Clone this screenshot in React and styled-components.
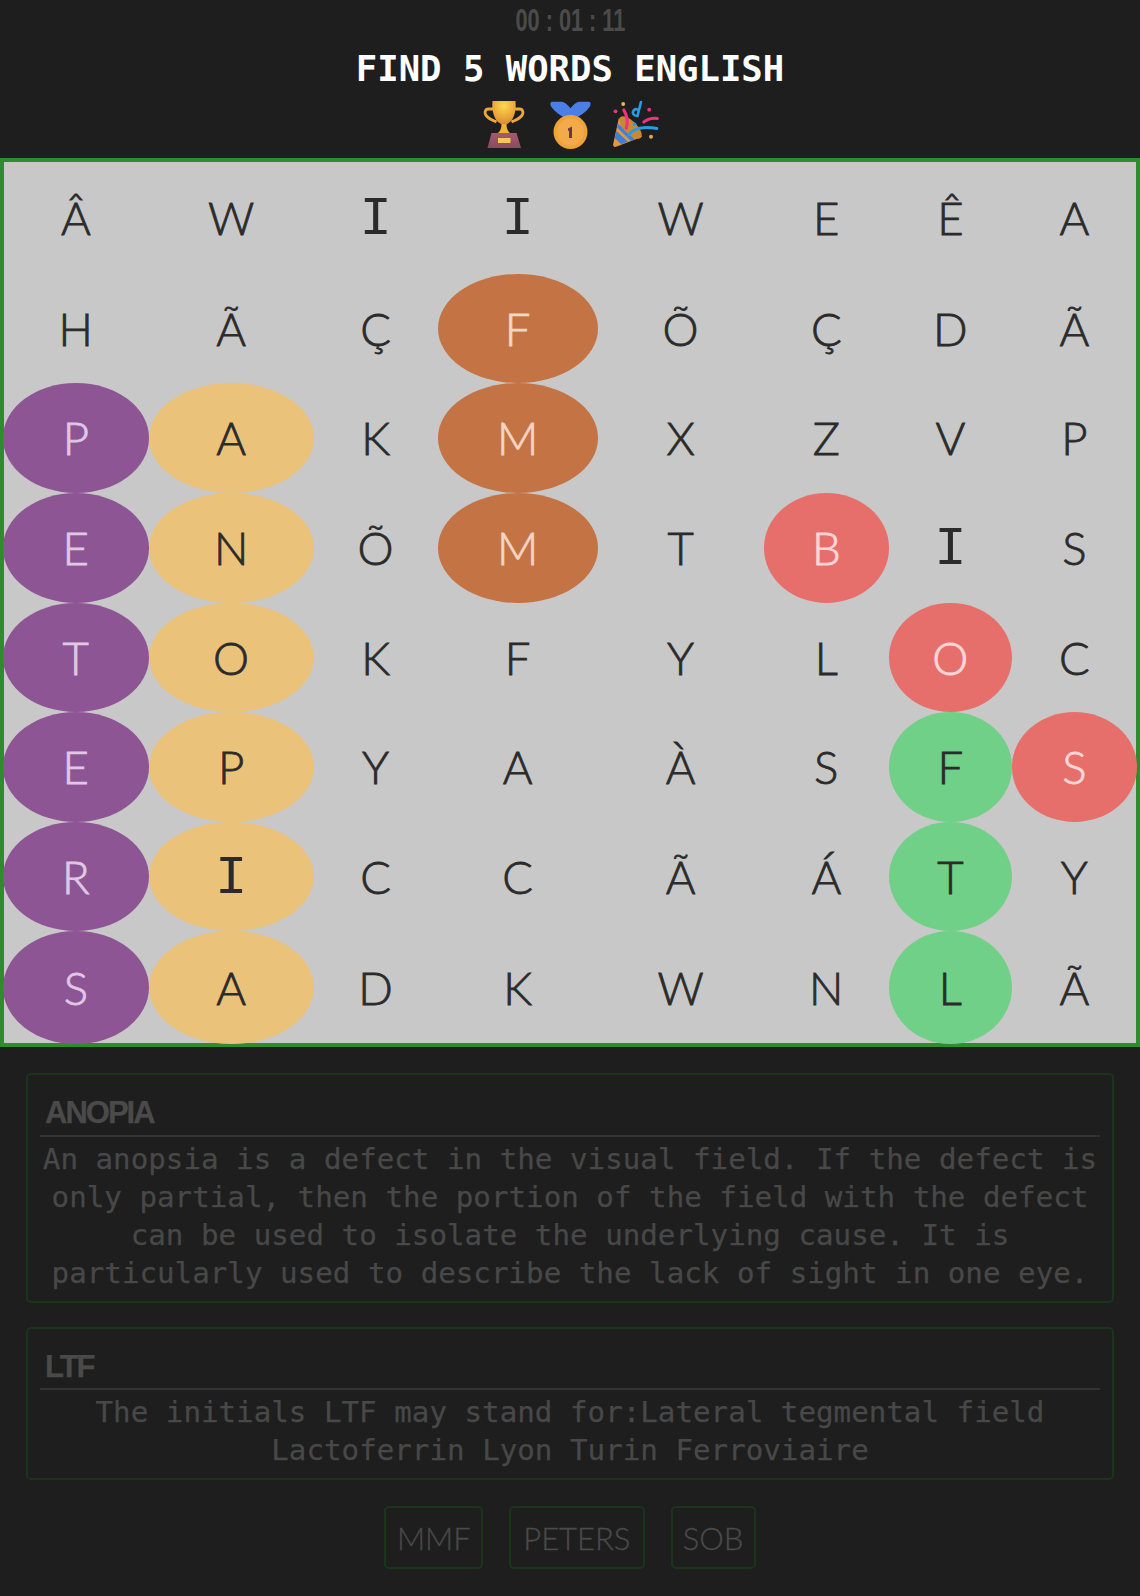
import React from "react";
import styled, { createGlobalStyle } from "styled-components";

const Global = createGlobalStyle`
  html, body { margin: 0; padding: 0; background: #1e1e1e; }
  body { font-family: "DejaVu Sans Mono", monospace; }
`;
const Page = styled.div`
  width: 1140px; height: 1596px; background: #1e1e1e; display: flex; flex-direction: column; overflow: hidden;
`;
const Header = styled.header`
  height: 158px; display: flex; flex-direction: column; align-items: center;
`;
const Timer = styled.div`
  height: 44px; line-height: 42px; font-family: "Liberation Sans", sans-serif; white-space: pre;
  font-size: 31px; font-weight: 700; color: #4b4b4b; transform: scaleX(0.7);
`;
const Title = styled.h1`
  margin: 0; height: 50px; line-height: 50px; font-size: 35.6px; font-weight: 700; color: #fff;
  font-family: "DejaVu Sans Mono", monospace;
`;
const Trophies = styled.div`
  display: flex; justify-content: center; gap: 16px; margin-top: 6px;
  svg { display: block; width: 50px; height: 50px; }
`;
const Board = styled.div`
  border: 4px solid #2e8b2e; background: #c8c8c8; height: 881px;
`;
const Grid = styled.div`
  margin-left: -1px; height: 881px; display: grid;
  grid-template-columns: 145.6px 165px 124px 160px 166px 125.4px 122.7px 125.3px;
  grid-template-rows: 111.8px repeat(6, 109.6px) 113px;
`;
const Cell = styled.div`
  display: flex; align-items: center; justify-content: center;
  font-family: ${p => (p.$serifed ? '"Liberation Mono", monospace' : "Lato, sans-serif")};
  font-size: ${p => (p.$serifed ? 54 : 45.5)}px; font-weight: ${p => (p.$serifed ? 400 : 300)}; line-height: 1;
  padding-top: ${p => (p.$serifed ? 4 : 0)}px;
  -webkit-text-stroke: ${p => (p.$serifed ? "0" : "0.8px")};
  color: ${p => p.$fg || "#2b2b2b"};
  background: ${p => p.$bg || "transparent"};
  border-radius: 50%;
`;
const Notes = styled.section`
  padding: 26px 26px 0; display: flex; flex-direction: column; gap: 24px;
`;
const Card = styled.article`
  border: 2px solid #1b351b; border-radius: 5px; padding: 20px 12px 9px; text-align: center;
  color: #484848; font-size: 29.2px; line-height: 38px; -webkit-text-stroke: 0.25px;
`;
const CardTitle = styled.h2`
  margin: 0 0 3px; text-align: left; font-size: 31px; line-height: 36px; font-weight: 700; color: #4a4a4a;
  font-family: "Liberation Sans", sans-serif; letter-spacing: -2px; padding: 0 0 3.5px 5px;
  border-bottom: 2px solid #333;
`;
const Chips = styled.div`
  display: flex; justify-content: center; gap: 25.5px; margin-top: 26px;
`;
const Chip = styled.div`
  border: 2px solid #1b351b; border-radius: 5px; height: 63px; box-sizing: border-box; width: ${p => p.$w}px;
  display: flex; align-items: center; justify-content: center;
  font-family: Lato, sans-serif; font-weight: 300; font-size: 31px; color: #4a4a4a; -webkit-text-stroke: 0.3px;
`;

const P = ["#8e5595", "#dfc8e3"];
const Y = ["#ebc279", "#2b2b2b"];
const O = ["#c47444", "#f2d6c5"];
const R = ["#e76f6b", "#fdd6d6"];
const G = ["#70d087", "#2b2b2b"];
const rows = [
  ["Â","W","I","I","W","E","Ê","A"],
  ["H","Ã","Ç",["F",O],"Õ","Ç","D","Ã"],
  [["P",P],["A",Y],"K",["M",O],"X","Z","V","P"],
  [["E",P],["N",Y],"Õ",["M",O],"T",["B",R],"I","S"],
  [["T",P],["O",Y],"K","F","Y","L",["O",R],"C"],
  [["E",P],["P",Y],"Y","A","À","S",["F",G],["S",R]],
  [["R",P],["I",Y],"C","C","Ã","Á",["T",G],"Y"],
  [["S",P],["A",Y],"D","K","W","N",["L",G],"Ã"],
];

const Trophy = () => (
  <svg viewBox="0 0 50 50">
    <defs>
      <radialGradient id="cup" cx="0.5" cy="0.2" r="0.85"><stop offset="0" stopColor="#ffd84e"/><stop offset="1" stopColor="#d98230"/></radialGradient>
      <linearGradient id="base" x1="0" y1="0" x2="0" y2="1"><stop offset="0" stopColor="#a35a6e"/><stop offset="1" stopColor="#8a4a60"/></linearGradient>
    </defs>
    <path d="M14 9H9.500C6 9 5 13 7.500 16c2.500 3 7 4.500 10 6M36 9h4.500C44 9 45 13 42.500 16c-2.500 3-7 4.500-10 6" fill="none" stroke="#eda936" strokeWidth="2.800"/>
    <path d="M13.500 1h23c1 11-2 22-11.500 24C15.500 23 12.500 12 13.500 1z" fill="url(#cup)"/>
    <path d="M22.500 24h5c0 4 1 7 3.500 9H19c2.500-2 3.500-5 3.500-9z" fill="#f2b23a"/>
    <path d="M12.500 33h25l4.500 15H8.500z" fill="url(#base)"/>
    <rect x="19" y="38" width="12.500" height="5" fill="#f5c659"/>
  </svg>
);
const Medal = () => (
  <svg viewBox="0 0 50 50">
    <path d="M7 1.700H17C20 2 23 5 25.500 8.300 28 5 31 2 34 1.700H44C46 2 46 5 44.500 7 41 12 36 15 32 17.500H19C15 15 10 12 6.500 7 5 5 5 2 7 1.700z" fill="#4a80e6"/>
    <circle cx="25.500" cy="32" r="17" fill="#f0a23a"/>
    <circle cx="25.500" cy="32" r="13.500" fill="#f3ab4a"/>
    <path d="M23 28.500l4-2v11.500h-3V30.500l-1 .5z" fill="#6e3448"/>
  </svg>
);
const Popper = () => (
  <svg viewBox="0 0 50 50">
    <path d="M7.800 18.300L2.300 43.500c-.8 3 1 4 3.500 3L31.200 36.700z" fill="#e3983e"/>
    <path d="M5.300 31l11.500 10.500-6.500 2.700L3.800 38zM7 23.500L24 39.500l-4 1.600L6.200 27.500z" fill="#3f7fd8"/>
    <ellipse cx="19.500" cy="27.500" rx="6.500" ry="14.500" transform="rotate(-45 19.500 27.500)" fill="#c98a2e"/>
    <path d="M17.800 35c4-7 16-9 28-6.500" fill="none" stroke="#2d9ae6" strokeWidth="3" strokeLinecap="round"/>
    <path d="M32.800 22c4-3 9-4 13.500-3.500" fill="none" stroke="#f0327f" strokeWidth="3" strokeLinecap="round"/>
    <path d="M12.800 10c3 5 4.500 11 2.500 18" fill="none" stroke="#f0327f" strokeWidth="3.200" strokeLinecap="round"/>
    <path d="M30 2l-3.500 14c-4 0-6-3-3.500-6 2-1.500 4-1 4.500 1" fill="none" stroke="#2d9ae6" strokeWidth="2.600" strokeLinecap="round"/>
    <circle cx="12.200" cy="4" r="1.900" fill="#efb94e"/><circle cx="4.500" cy="11.300" r="1.900" fill="#f0327f"/>
    <circle cx="38.200" cy="9.700" r="1.900" fill="#f0327f"/><circle cx="40" cy="36.700" r="2" fill="#e7a84b"/>
    <circle cx="23.500" cy="24.300" r="1.900" fill="#2d9ae6"/>
  </svg>
);

export default function App() {
  return (
    <Page>
      <Global />
      <Header>
        <Timer>00 : 01 : 11</Timer>
        <Title>FIND 5 WORDS ENGLISH</Title>
        <Trophies><Trophy /><Medal /><Popper /></Trophies>
      </Header>
      <Board>
        <Grid>
          {rows.flat().map((c, i) => {
            const [ch, col] = Array.isArray(c) ? c : [c, []];
            return <Cell key={i} $bg={col[0]} $fg={col[1]} $serifed={ch === "I"}>{ch}</Cell>;
          })}
        </Grid>
      </Board>
      <Notes>
        <Card>
          <CardTitle>ANOPIA</CardTitle>
          An anopsia is a defect in the visual field. If the defect is only partial, then the portion of the field with the defect can be used to isolate the underlying cause. It is particularly used to describe the lack of sight in one eye.
        </Card>
        <Card>
          <CardTitle>LTF</CardTitle>
          The initials LTF may stand for:Lateral tegmental field Lactoferrin Lyon Turin Ferroviaire
        </Card>
      </Notes>
      <Chips>
        <Chip $w={98.7}>MMF</Chip>
        <Chip $w={136.4}>PETERS</Chip>
        <Chip $w={85}>SOB</Chip>
      </Chips>
    </Page>
  );
}
